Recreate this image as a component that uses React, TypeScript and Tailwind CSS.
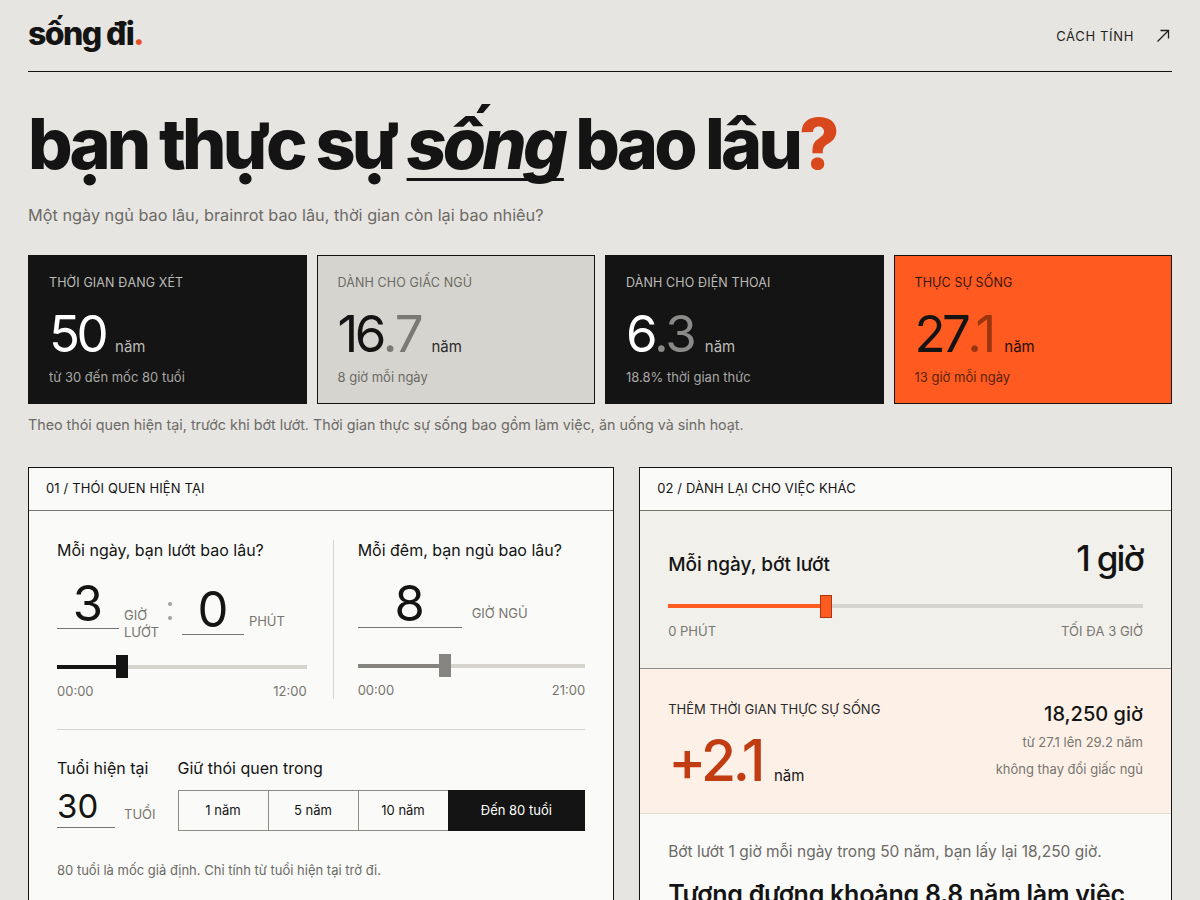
import React from "react";

function Slider({
  pct,
  fill,
  thumb,
  thumbBorder,
}: {
  pct: number;
  fill: string;
  thumb: string;
  thumbBorder?: string;
}) {
  return (
    <div className="relative h-[23px] flex items-center">
      <div className="h-[4px] w-full bg-[#d6d4ce]" />
      <div className={`absolute left-0 h-[4px] ${fill}`} style={{ width: `${pct}%` }} />
      <div
        className={`absolute top-0 h-[23px] w-[12px] ${thumb} ${thumbBorder ?? ""}`}
        style={{ left: `calc(${pct}% - 6px)` }}
      />
    </div>
  );
}

function StatCard({
  label,
  whole,
  dec,
  sub,
  cls,
  labelCls,
  wholeCls,
  decCls,
  unitCls,
  subCls,
}: {
  label: string;
  whole: string;
  dec?: string;
  sub: string;
  cls: string;
  labelCls: string;
  wholeCls: string;
  decCls?: string;
  unitCls: string;
  subCls: string;
}) {
  return (
    <div className={`border px-[20px] pt-[19px] pb-[18px] ${cls}`}>
      <div className={`text-[12.5px] leading-[16px] uppercase tracking-[0.01em] ${labelCls}`}>{label}</div>
      <div className="mt-[17px] flex items-baseline">
        <span className={`text-[51px] leading-none tracking-[-0.07em] ${wholeCls}`}>
          {whole}
          {dec && <span className={`${decCls} tracking-[-0.04em]`}>{dec}</span>}
        </span>
        <span className={`ml-[10px] text-[15px] ${unitCls}`}>năm</span>
      </div>
      <div className={`mt-[10px] text-[13px] leading-[16px] ${subCls}`}>{sub}</div>
    </div>
  );
}

export default function App() {
  return (
    <div className="min-h-screen bg-[#e7e5e1] font-['Inter',sans-serif] text-[#141414]">
      <div className="px-[28px] pb-[40px]">
        <header className="h-[72px] flex items-center justify-between border-b border-[#141414]">
          <div className="text-[32px] font-extrabold tracking-[-0.05em] leading-none -mt-[3px]">
            sống đi<span className="text-[#e5531f]">.</span>
          </div>
          <div className="flex items-center gap-[22px] text-[13px] tracking-[0.05em] uppercase text-[#1f1f1f] pr-[2px]">
            <span className="mt-[3px]">Cách tính</span>
            <svg width="14" height="14" viewBox="0 0 14 14" fill="none" stroke="#1f1f1f" strokeWidth="1.3">
              <path d="M1.5 12.5 L12.5 1.5" />
              <path d="M4.5 1.5 H12.5 V9.5" />
            </svg>
          </div>
        </header>

        <h1 className="mt-[37px] text-[70px] font-extrabold leading-none tracking-[-0.055em]">
          bạn thực sự{" "}
          <span className="italic underline decoration-[3px] underline-offset-[9px] [text-decoration-skip-ink:none]">
            sống
          </span>{" "}
          bao lâu
          <span className="text-[#d9481c]">?</span>
        </h1>

        <p className="mt-[24px] text-[16.3px] leading-[24px] text-[#6b6a66]">
          Một ngày ngủ bao lâu, brainrot bao lâu, thời gian còn lại bao nhiêu?
        </p>

        <div className="mt-[28px] grid grid-cols-4 gap-[10px]">
          <StatCard
            label="Thời gian đang xét"
            whole="50"
            sub="từ 30 đến mốc 80 tuổi"
            cls="bg-[#141414] border-[#141414]"
            labelCls="text-[#bdbcb8]"
            wholeCls="text-white"
            unitCls="text-[#bdbcb8]"
            subCls="text-[#a9a8a4]"
          />
          <StatCard
            label="Dành cho giấc ngủ"
            whole="16"
            dec=".7"
            sub="8 giờ mỗi ngày"
            cls="bg-[#d6d4ce] border-[#141414]"
            labelCls="text-[#6b6a66]"
            wholeCls="text-[#141414]"
            decCls="text-[#7a7975]"
            unitCls="text-[#2a2a2a]"
            subCls="text-[#6b6a66]"
          />
          <StatCard
            label="Dành cho điện thoại"
            whole="6"
            dec=".3"
            sub="18.8% thời gian thức"
            cls="bg-[#141414] border-[#141414]"
            labelCls="text-[#bdbcb8]"
            wholeCls="text-white"
            decCls="text-[#8a8a88]"
            unitCls="text-[#bdbcb8]"
            subCls="text-[#a9a8a4]"
          />
          <StatCard
            label="Thực sự sống"
            whole="27"
            dec=".1"
            sub="13 giờ mỗi ngày"
            cls="bg-[#ff5a1f] border-[#141414]"
            labelCls="text-[#3a160a]"
            wholeCls="text-[#141414]"
            decCls="text-[#9a3510]"
            unitCls="text-[#1f0f08]"
            subCls="text-[#5a220c]"
          />
        </div>

        <p className="mt-[11px] text-[14.3px] leading-[20px] text-[#6b6a66]">
          Theo thói quen hiện tại, trước khi bớt lướt. Thời gian thực sự sống bao gồm làm việc, ăn uống và sinh hoạt.
        </p>

        <div className="mt-[32px] grid grid-cols-[1.1fr_1fr] gap-[25px] items-start">
          {/* LEFT PANEL */}
          <section className="border border-[#141414] bg-[#fafaf8]">
            <div className="h-[43px] border-b border-[#77756f] px-[17px] flex items-center text-[13px] uppercase tracking-[0.01em]">
              01 / Thói quen hiện tại
            </div>
            <div className="px-[28px] pt-[29px] pb-[40px]">
              <div className="grid grid-cols-[1.1fr_1fr]">
                <div className="pr-[26px] border-r border-[#d6d4ce]">
                  <div className="text-[16px] leading-[20px]">Mỗi ngày, bạn lướt bao lâu?</div>
                  <div className="mt-[19px] flex items-start">
                    <div className="w-[62px] h-[50px] border-b border-[#77756f] text-center text-[49px] leading-none">
                      3
                    </div>
                    <div className="ml-[5px] mt-[28px] text-[13px] leading-[17px] uppercase text-[#77756f]">
                      Giờ
                      <br />
                      Lướt
                    </div>
                    <div className="ml-[9px] mt-[23px] flex flex-col gap-[10px]">
                      <div className="w-[4px] h-[4px] rounded-full bg-[#a3a19c]" />
                      <div className="w-[4px] h-[4px] rounded-full bg-[#a3a19c]" />
                    </div>
                    <div className="ml-[10px] mt-[6px] w-[62px] h-[50px] border-b border-[#77756f] text-center text-[49px] leading-none">
                      0
                    </div>
                    <div className="ml-[5px] mt-[34px] text-[13px] leading-[17px] uppercase text-[#77756f]">Phút</div>
                  </div>
                  <div className="mt-[14px]">
                    <Slider pct={26} fill="bg-[#141414]" thumb="bg-[#141414]" />
                  </div>
                  <div className="mt-[5px] flex justify-between text-[13px] leading-[16px] text-[#77756f]">
                    <span>00:00</span>
                    <span>12:00</span>
                  </div>
                </div>
                <div className="pl-[24px]">
                  <div className="text-[16px] leading-[20px]">Mỗi đêm, bạn ngủ bao lâu?</div>
                  <div className="mt-[19px] flex items-start">
                    <div className="w-[104px] h-[49px] border-b border-[#77756f] text-center text-[49px] leading-none">
                      8
                    </div>
                    <div className="ml-[10px] mt-[26px] text-[13px] leading-[17px] uppercase text-[#77756f]">Giờ ngủ</div>
                  </div>
                  <div className="mt-[26px]">
                    <Slider pct={38.5} fill="bg-[#858480]" thumb="bg-[#858480]" />
                  </div>
                  <div className="mt-[5px] flex justify-between text-[13px] leading-[16px] text-[#77756f]">
                    <span>00:00</span>
                    <span>21:00</span>
                  </div>
                </div>
              </div>

              <div className="mt-[30px] h-px bg-[#d6d4ce]" />

              <div className="mt-[28px] flex gap-[22px]">
                <div>
                  <div className="text-[16px] leading-[20px]">Tuổi hiện tại</div>
                  <div className="mt-[12px] flex items-start">
                    <div className="w-[58px] h-[38px] border-b border-[#77756f] text-[33px] leading-none">30</div>
                    <div className="ml-[9px] mt-[16px] text-[13px] leading-[17px] uppercase text-[#77756f]">Tuổi</div>
                  </div>
                </div>
                <div className="flex-1">
                  <div className="text-[16px] leading-[20px]">Giữ thói quen trong</div>
                  <div className="mt-[12px] flex h-[41px] border border-[#8e8c87] text-[13px]">
                    <div className="w-[90px] flex items-center justify-center border-r border-[#8e8c87]">1 năm</div>
                    <div className="w-[90px] flex items-center justify-center border-r border-[#8e8c87]">5 năm</div>
                    <div className="w-[89px] flex items-center justify-center">10 năm</div>
                    <div className="flex-1 flex items-center justify-center bg-[#141414] text-white -my-px -mr-px">
                      Đến 80 tuổi
                    </div>
                  </div>
                </div>
              </div>

              <p className="mt-[31px] text-[13px] leading-[16px] text-[#6b6a66]">
                80 tuổi là mốc giả định. Chỉ tính từ tuổi hiện tại trở đi.
              </p>
            </div>
          </section>

          {/* RIGHT PANEL */}
          <section className="border border-[#141414] bg-[#fafaf8]">
            <div className="h-[43px] border-b border-[#77756f] px-[17px] flex items-center text-[13px] uppercase tracking-[0.01em]">
              02 / Dành lại cho việc khác
            </div>
            <div className="bg-[#f2f0eb] px-[28px] pt-[30px] pb-[29px] border-b border-[#8e8c87]">
              <div className="flex items-baseline justify-between">
                <div className="text-[19px] font-medium">Mỗi ngày, bớt lướt</div>
                <div className="text-[35px] leading-none font-medium tracking-[-0.05em]">1 giờ</div>
              </div>
              <div className="mt-[15px]">
                <Slider pct={33.3} fill="bg-[#ff5a1f]" thumb="bg-[#ff5a1f]" thumbBorder="border border-[#a9380f]" />
              </div>
              <div className="mt-[5px] flex justify-between text-[13px] leading-[16px] uppercase text-[#77756f]">
                <span>0 phút</span>
                <span>Tối đa 3 giờ</span>
              </div>
            </div>
            <div className="bg-[#fdf1e7] px-[28px] pt-[32px] pb-[24px] border-b border-[#e2ded6] flex justify-between">
              <div>
                <div className="text-[13px] leading-[16px] uppercase text-[#2a2a2a]">Thêm thời gian thực sự sống</div>
                <div className="mt-[15px] flex items-baseline">
                  <span className="text-[57px] leading-none font-medium tracking-[-0.06em] text-[#c23c12]">+2.1</span>
                  <span className="ml-[12px] text-[15px]">năm</span>
                </div>
              </div>
              <div className="text-right">
                <div className="text-[20px] leading-[26px] font-medium">18,250 giờ</div>
                <div className="mt-[5px] text-[13px] leading-[20px] text-[#77756f]">từ 27.1 lên 29.2 năm</div>
                <div className="mt-[7px] text-[13px] leading-[20px] text-[#77756f]">không thay đổi giấc ngủ</div>
              </div>
            </div>
            <div className="px-[28px] pt-[28px] pb-[30px]">
              <p className="text-[15.5px] leading-[20px] text-[#6b6a66]">
                Bớt lướt 1 giờ mỗi ngày trong 50 năm, bạn lấy lại 18,250 giờ.
              </p>
              <div className="mt-[16px] text-[25px] leading-[32px] font-semibold tracking-[-0.01em]">
                Tương đương khoảng 8.8 năm làm việc
              </div>
            </div>
          </section>
        </div>
      </div>
    </div>
  );
}
